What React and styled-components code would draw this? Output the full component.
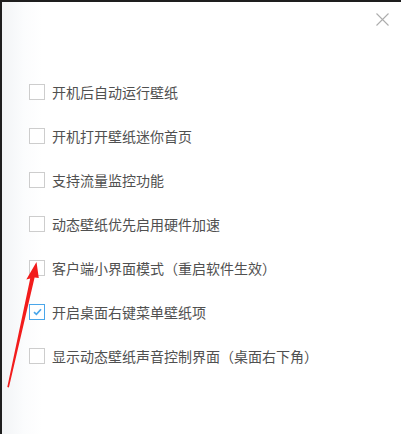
import React, { useState } from 'react'
import styled, { createGlobalStyle } from 'styled-components'

const GlobalStyle = createGlobalStyle`
  html, body {
    margin: 0;
    padding: 0;
    background: #1e1e1e;
    overflow: hidden;
  }
`;

const Panel = styled.div`
  position: relative;
  margin: 2px 0 0 2px;
  height: 432px;
  background: linear-gradient(to right, #f2f4f6 0px, #fbfcfd 22px, #ffffff 40px);
  font-family: "Noto Sans CJK SC", "Noto Sans", sans-serif;
`;

const Header = styled.div`
  height: 68px;
  display: flex;
  justify-content: flex-end;
  align-items: flex-start;
  padding: 11px 12px 0 0;
  box-sizing: border-box;
`;

const CloseButton = styled.button`
  width: 13px;
  height: 13px;
  padding: 0;
  border: none;
  background: none;
  display: flex;
  cursor: pointer;
`;

const List = styled.ul`
  list-style: none;
  margin: 0;
  padding: 0 0 0 27px;
`;

const Row = styled.li`
  height: 44px;
  display: flex;
  align-items: center;
  gap: 7px;
  cursor: pointer;
`;

const Box = styled.span`
  width: 16px;
  height: 16px;
  box-sizing: border-box;
  border: 1px solid ${p => (p.$checked ? '#4aa6ea' : '#cdcdcd')};
  background: #fff;
  display: flex;
  align-items: center;
  justify-content: center;
  flex-shrink: 0;
`;

const Label = styled.span`
  font-size: 14px;
  color: #505050;
  line-height: 20px;
  white-space: nowrap;
`;

const Arrow = styled.svg`
  position: absolute;
  left: -2px;
  top: -2px;
  width: 60px;
  height: 400px;
  pointer-events: none;
`;

const items = [
  { label: '开机后自动运行壁纸', checked: false },
  { label: '开机打开壁纸迷你首页', checked: false },
  { label: '支持流量监控功能', checked: false },
  { label: '动态壁纸优先启用硬件加速', checked: false },
  { label: '客户端小界面模式（重启软件生效）', checked: false },
  { label: '开启桌面右键菜单壁纸项', checked: true },
  { label: '显示动态壁纸声音控制界面（桌面右下角）', checked: false },
];

const App = () => {
  const [state, setState] = useState(items.map(i => i.checked));

  const toggle = idx => {
    setState(state.map((v, i) => (i === idx ? !v : v)));
  };

  return (
    <>
      <GlobalStyle />
      <Panel>
        <Header>
          <CloseButton aria-label="close">
            <svg width="13" height="13" viewBox="0 0 13 13">
              <path d="M0.5 0.5 L12.5 12.5 M12.5 0.5 L0.5 12.5" stroke="#adadad" strokeWidth="1.1" fill="none" />
            </svg>
          </CloseButton>
        </Header>
        <List>
          {items.map((item, i) => (
            <Row key={item.label} onClick={() => toggle(i)}>
              <Box $checked={state[i]}>
                {state[i] && (
                  <svg width="9" height="8" viewBox="0 0 9 8">
                    <path d="M1 4.2 L3.4 6.4 L8 1.3" stroke="#4aa6ea" strokeWidth="1.7" fill="none" />
                  </svg>
                )}
              </Box>
              <Label>{item.label}</Label>
            </Row>
          ))}
        </List>
        <Arrow viewBox="0 0 60 400">
          <polygon
            points="36.5,262 38.8,278 34.6,277.6 8.9,387.5 7.3,387 30.2,278.6 26.3,279.5"
            fill="#f21c1c"
          />
        </Arrow>
      </Panel>
    </>
  )
}

export default App
